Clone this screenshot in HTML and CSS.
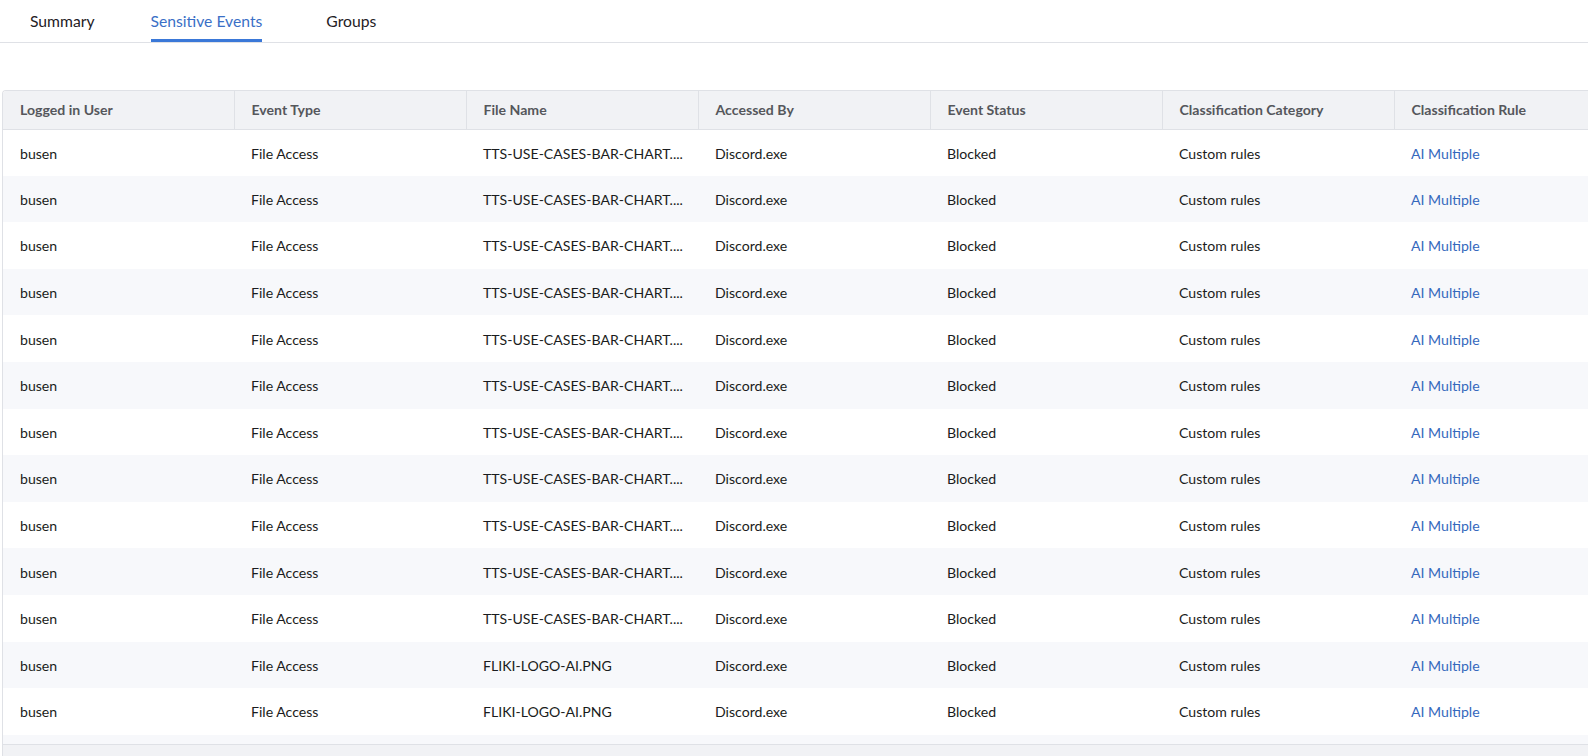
FILE: index.html
```html
<!DOCTYPE html>
<html lang="en">
  <head>
    <meta charset="UTF-8" />
    <meta name="viewport" content="width=device-width, initial-scale=1.0" />
    <title>Sensitive Events</title>
    <link rel="stylesheet" href="styles.css">
  </head>
  <body>
    <nav class="tabs">
      <a class="tab">Summary</a>
      <a class="tab active">Sensitive Events</a>
      <a class="tab">Groups</a>
    </nav>

    <div class="table-wrap">
      <table class="events-table">
        <colgroup>
          <col class="col-first" />
          <col class="col" />
          <col class="col" />
          <col class="col" />
          <col class="col" />
          <col class="col" />
          <col class="col-last" />
        </colgroup>
        <thead>
          <tr>
            <th>Logged in User</th>
            <th>Event Type</th>
            <th>File Name</th>
            <th>Accessed By</th>
            <th>Event Status</th>
            <th>Classification Category</th>
            <th>Classification Rule</th>
          </tr>
        </thead>
        <tbody id="eventRows"></tbody>
      </table>
      <div class="table-foot"></div>
      <div class="scroll-track"></div>
    </div>

    <script>
      const files = [
        "TTS-USE-CASES-BAR-CHART....",
        "TTS-USE-CASES-BAR-CHART....",
        "TTS-USE-CASES-BAR-CHART....",
        "TTS-USE-CASES-BAR-CHART....",
        "TTS-USE-CASES-BAR-CHART....",
        "TTS-USE-CASES-BAR-CHART....",
        "TTS-USE-CASES-BAR-CHART....",
        "TTS-USE-CASES-BAR-CHART....",
        "TTS-USE-CASES-BAR-CHART....",
        "TTS-USE-CASES-BAR-CHART....",
        "TTS-USE-CASES-BAR-CHART....",
        "FLIKI-LOGO-AI.PNG",
        "FLIKI-LOGO-AI.PNG",
      ];

      const rows = document.getElementById("eventRows");

      files.forEach((file) => {
        const tr = document.createElement("tr");
        tr.innerHTML = `
          <td>busen</td>
          <td>File Access</td>
          <td>${file}</td>
          <td>Discord.exe</td>
          <td>Blocked</td>
          <td>Custom rules</td>
          <td><a class="rule-link">AI Multiple</a></td>`;
        rows.appendChild(tr);
      });
    </script>
  </body>
</html>
```

FILE: styles.css
```css
* {
  margin: 0;
  padding: 0;
  box-sizing: border-box;
}

body {
  font-family: "Lato", "Open Sans", sans-serif;
  background: #ffffff;
  color: #1d1f24;
  overflow: hidden;
}

.tabs {
  display: flex;
  gap: 56px;
  padding-left: 30px;
  height: 43px;
  border-bottom: 1px solid #dfe1e6;
}

.tab {
  font-size: 15.7px;
  color: #1f2125;
  line-height: 42px;
  border-bottom: 3px solid transparent;
  height: 42px;
  cursor: pointer;
}

.tab:last-child {
  margin-left: 8px;
}

.tab.active {
  color: #3a6fc6;
  border-bottom-color: #3a78d8;
}

.table-wrap {
  margin-top: 47px;
  margin-left: 2px;
  border-top: 1px solid #dfe1e6;
  border-left: 1px solid #dfe1e6;
  border-top-left-radius: 4px;
  overflow: hidden;
}

.events-table {
  border-collapse: collapse;
  table-layout: fixed;
  width: 1797px;
  font-size: 14.1px;
}

.col-first {
  width: 231px;
}

.col {
  width: 232px;
}

.col-last {
  width: 406px;
}

.events-table th,
.events-table td {
  text-align: left;
  padding: 0 17px;
  white-space: nowrap;
  overflow: hidden;
}

.events-table th {
  height: 38px;
  background: #f1f2f5;
  color: #55575c;
  font-weight: 700;
  border-right: 1px solid #dfe1e6;
  border-bottom: 1px solid #dfe1e6;
}

.events-table td {
  height: 46.6px;
  padding-top: 1px;
  color: #1a1c20;
}

.events-table tbody tr:nth-child(even) {
  background: #f7f8fb;
}

.rule-link {
  color: #3568bd;
  cursor: pointer;
}

.table-foot {
  height: 10px;
  background: #f7f8fb;
  border-bottom: 1px solid #dfe1e6;
}

.scroll-track {
  height: 20px;
  background: #f1f2f5;
}
```
